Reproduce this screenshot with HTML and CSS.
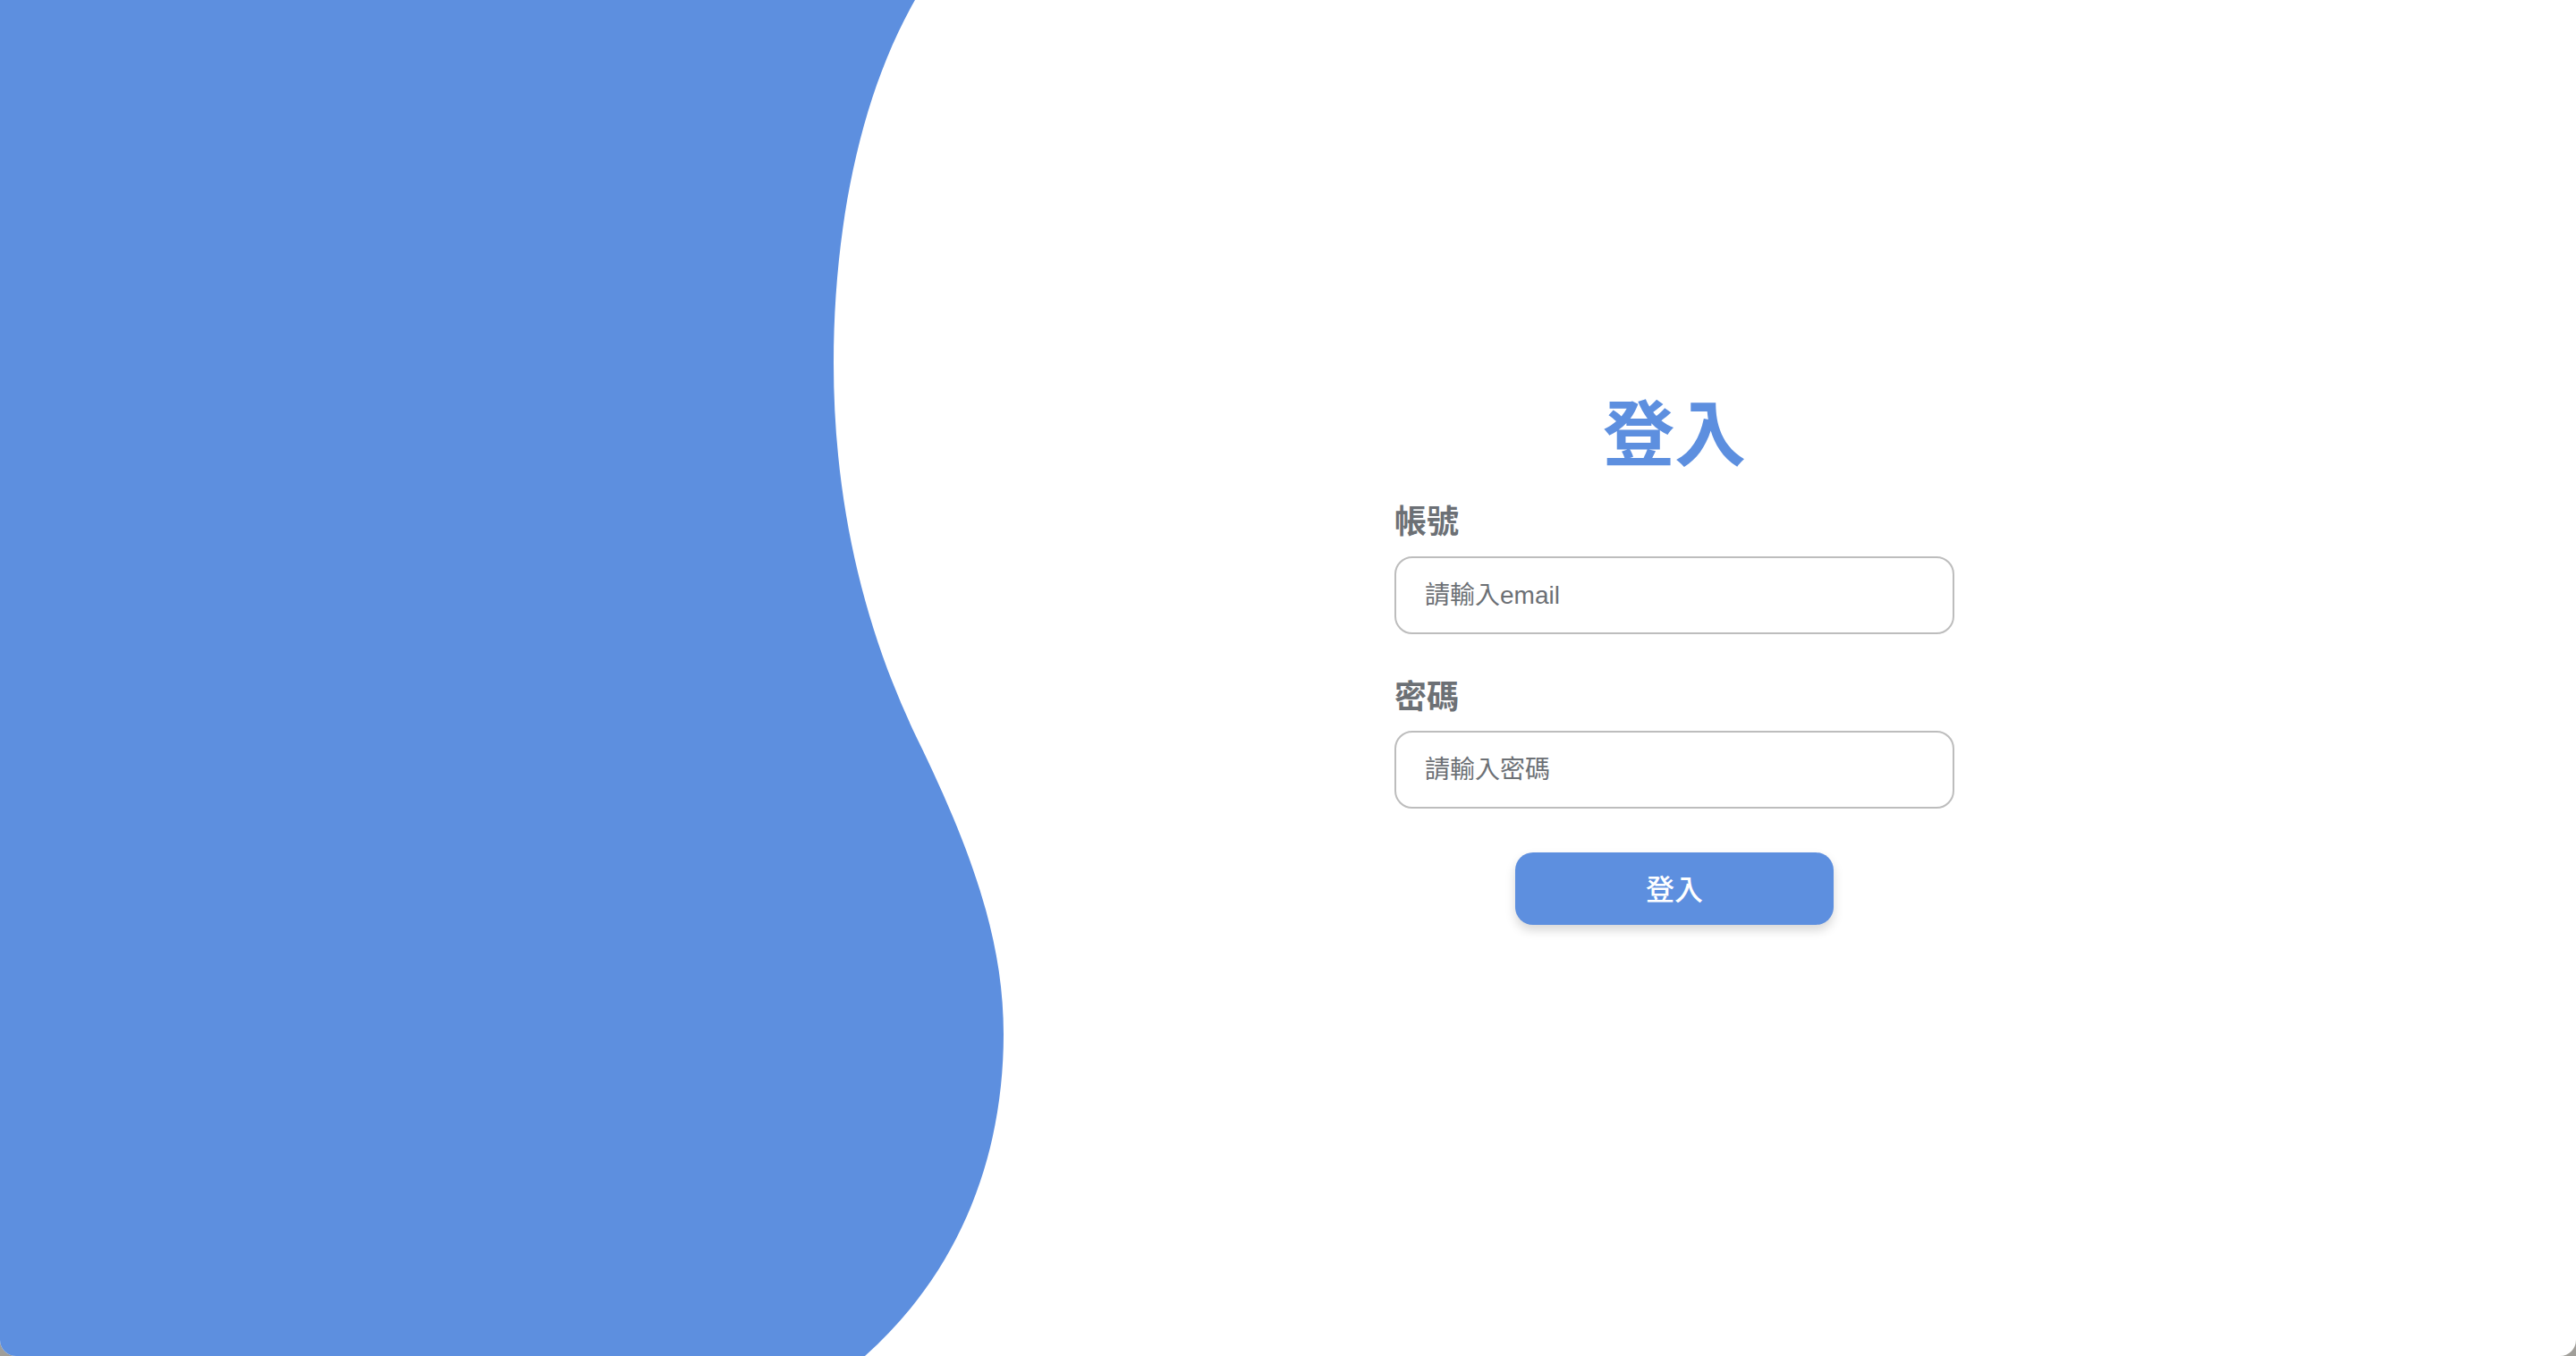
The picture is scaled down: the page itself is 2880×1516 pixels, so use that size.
FILE: index.html
```html
<!DOCTYPE html>
<html lang="zh-Hant">
<head>
<meta charset="utf-8">
<title>登入</title>
<link rel="stylesheet" href="styles.css">
</head>
<body>
<div class="window">
  <svg class="wave" viewBox="0 0 1130 1516" width="1130" height="1516" aria-hidden="true">
    <path d="M0 0 H1023 C960 110 932 260 932 406 C932 560 965 700 1025 825 C1086 950 1122 1050 1122 1156 C1122 1290 1075 1420 967 1516 H0 Z" fill="#5d8fdf"/>
  </svg>
  <div class="side"></div>
  <main class="main">
    <form class="login">
      <h1 class="title">登入</h1>
      <label class="label" for="email">帳號</label>
      <input class="field" id="email" type="text" placeholder="請輸入email">
      <label class="label label-pw" for="pw">密碼</label>
      <input class="field" id="pw" type="password" placeholder="請輸入密碼">
      <button class="btn" type="button">登入</button>
    </form>
  </main>
</div>
</body>
</html>
```
FILE: styles.css
```css
html, body {
  margin: 0;
  padding: 0;
}
body {
  background: #a09e99;
  font-family: "Liberation Sans", "Noto Sans CJK TC", sans-serif;
}
.window {
  position: relative;
  width: 2880px;
  height: 1516px;
  background: #ffffff;
  border-radius: 0 0 18px 18px;
  overflow: hidden;
  display: grid;
  grid-template-columns: 864px 1fr;
}
.wave {
  position: absolute;
  left: 0;
  top: 0;
  display: block;
}
.side {
  position: relative;
}
.main {
  position: relative;
  display: flex;
  justify-content: center;
  padding-top: 439px;
}
.login {
  width: 626px;
  display: flex;
  flex-direction: column;
  margin: 0;
}
.title {
  margin: 0 0 43px;
  font-family: "Noto Sans CJK TC", sans-serif;
  font-size: 80px;
  line-height: 1;
  font-weight: 700;
  color: #5d8fdf;
  text-align: center;
}
.label {
  font-family: "Noto Sans CJK TC", sans-serif;
  font-size: 36px;
  line-height: 1;
  font-weight: 700;
  color: #6c7075;
  margin-bottom: 24px;
}
.label-pw {
  margin-top: 49px;
  margin-bottom: 23px;
}
.field {
  box-sizing: border-box;
  width: 626px;
  height: 87px;
  border: 2px solid #bdbdbd;
  border-radius: 20px;
  padding: 0 32px;
  font-family: "Liberation Sans", "Noto Sans CJK TC", sans-serif;
  font-size: 28px;
  color: #333;
  background: #fff;
  outline: none;
}
.field::placeholder {
  color: #6c7075;
  opacity: 1;
}
.btn {
  align-self: center;
  margin-top: 49px;
  width: 356px;
  height: 81px;
  padding: 0 0 4px;
  border: none;
  border-radius: 20px;
  background: #5d8fdf;
  color: #ffffff;
  font-family: "Noto Sans CJK TC", sans-serif;
  font-size: 32px;
  line-height: 1;
  font-weight: 500;
  box-shadow: 0 6px 12px rgba(0, 0, 0, 0.16);
  cursor: pointer;
}
```
